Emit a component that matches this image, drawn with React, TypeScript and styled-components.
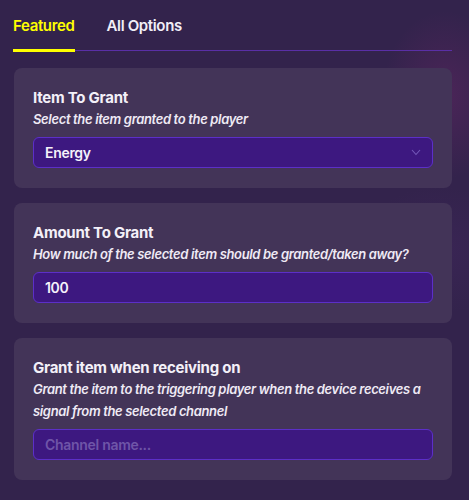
import React from "react";
import styled, { createGlobalStyle } from "styled-components";

const GlobalStyle = createGlobalStyle`
  html, body {
    margin: 0;
    padding: 0;
    height: 100%;
  }
  body {
    font-family: Inter, "Noto Sans", sans-serif;
    background: #33234c;
    overflow: hidden;
  }
`;

const Page = styled.div`
  position: relative;
  width: 469px;
  height: 500px;
  padding: 0 17px 0 14px;
  box-sizing: border-box;
  background:
    radial-gradient(ellipse 90px 120px at 445px 95px, rgba(120, 40, 110, 0.35), transparent 70%),
    radial-gradient(ellipse 120px 90px at 440px 250px, rgba(70, 40, 100, 0.35), transparent 70%),
    #33234c;
`;

const Tabs = styled.div`
  display: flex;
  gap: 32px;
  border-bottom: 1px solid #5a2fa6;
  height: 51px;
  box-sizing: border-box;
  margin-left: -1px;
`;

const Tab = styled.div<{ $active?: boolean }>`
  display: flex;
  align-items: center;
  padding-top: 2px;
  font-size: 15px;
  font-weight: 600;
  letter-spacing: -0.35px;
  color: ${({ $active }) => ($active ? "#ffff00" : "#f1eef7")};
  border-bottom: 3px solid ${({ $active }) => ($active ? "#ffff00" : "transparent")};
  margin-bottom: -2px;
`;

const Cards = styled.div`
  display: flex;
  flex-direction: column;
  gap: 15px;
  padding-top: 17px;
`;

const Card = styled.div`
  background: #433458;
  border-radius: 8px;
  padding: 20px 19px;
  display: flex;
  flex-direction: column;
`;

const Title = styled.div`
  font-size: 15px;
  font-weight: 700;
  line-height: 20px;
  color: #f3f0f8;
  letter-spacing: -0.25px;
`;

const Sub = styled.div`
  font-size: 13px;
  font-style: italic;
  font-weight: 600;
  line-height: 22px;
  color: #efeaf5;
  letter-spacing: -0.35px;
  margin-bottom: 7px;
`;

const Field = styled.div<{ $placeholder?: boolean }>`
  height: 31px;
  box-sizing: border-box;
  border: 1px solid #5c2fc8;
  border-radius: 6px;
  background: #3d1880;
  display: flex;
  align-items: center;
  justify-content: space-between;
  padding: 0 11px;
  font-size: 14px;
  font-weight: 600;
  letter-spacing: -0.3px;
  color: ${({ $placeholder }) => ($placeholder ? "#6f55a8" : "#f5f2fa")};
`;

const Chevron = () => (
  <svg width="10" height="7" viewBox="0 0 10 7" fill="none">
    <path d="M1 1l4 4.5L9 1" stroke="#7458b8" strokeWidth="1.1" />
  </svg>
);

export default function App() {
  return (
    <Page>
      <GlobalStyle />
      <Tabs>
        <Tab $active>Featured</Tab>
        <Tab>All Options</Tab>
      </Tabs>
      <Cards>
        <Card>
          <Title>Item To Grant</Title>
          <Sub>Select the item granted to the player</Sub>
          <Field>
            Energy
            <Chevron />
          </Field>
        </Card>
        <Card>
          <Title>Amount To Grant</Title>
          <Sub>How much of the selected item should be granted/taken away?</Sub>
          <Field>100</Field>
        </Card>
        <Card>
          <Title>Grant item when receiving on</Title>
          <Sub>
            Grant the item to the triggering player when the device receives a signal from the
            selected channel
          </Sub>
          <Field $placeholder>Channel name...</Field>
        </Card>
      </Cards>
    </Page>
  );
}
